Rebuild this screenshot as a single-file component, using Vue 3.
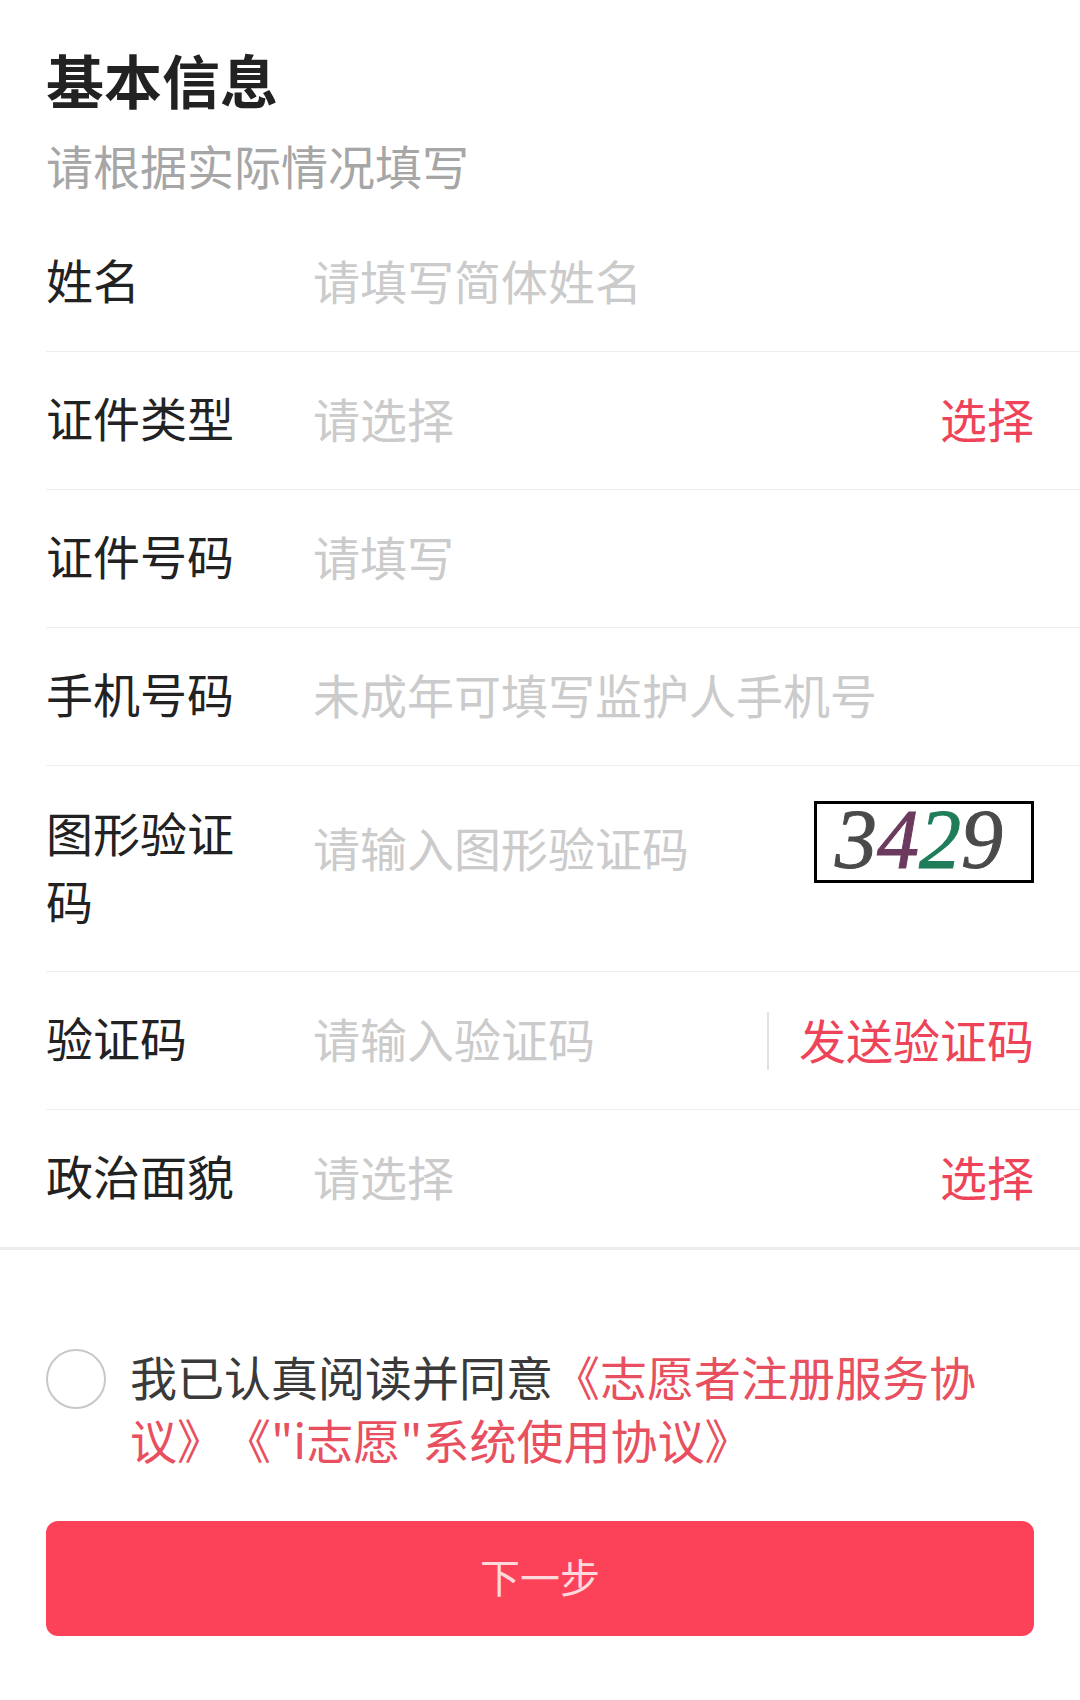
<template>
  <div class="page">
    <div class="head">
      <h1 class="title">基本信息</h1>
      <p class="sub">请根据实际情况填写</p>
    </div>

    <div class="form">
      <div class="row">
        <label class="label">姓名</label>
        <span class="holder">请填写简体姓名</span>
      </div>
      <div class="row">
        <label class="label">证件类型</label>
        <span class="holder">请选择</span>
        <span class="action">选择</span>
      </div>
      <div class="row">
        <label class="label">证件号码</label>
        <span class="holder">请填写</span>
      </div>
      <div class="row">
        <label class="label">手机号码</label>
        <span class="holder">未成年可填写监护人手机号</span>
      </div>
      <div class="row row-captcha">
        <label class="label">图形验证码</label>
        <span class="holder">请输入图形验证码</span>
        <div class="captcha">
          <span>3</span><span class="c-purple">4</span><span class="c-green">2</span><span>9</span>
        </div>
      </div>
      <div class="row">
        <label class="label">验证码</label>
        <span class="holder">请输入验证码</span>
        <span class="action action-send">发送验证码</span>
      </div>
      <div class="row">
        <label class="label">政治面貌</label>
        <span class="holder">请选择</span>
        <span class="action">选择</span>
      </div>
    </div>

    <div class="rule"></div>

    <div class="agree">
      <span class="check"></span>
      <p class="agree-text">我已认真阅读并同意<span class="link">《志愿者注册服务协议》《"i志愿"系统使用协议》</span></p>
    </div>

    <button class="next">下一步</button>
  </div>
</template>

<script setup>
</script>

<style>
html, body { background: #fff; }
</style>

<style scoped>
.page {
  width: 1080px;
  height: 1700px;
  background: #fff;
  font-family: "Noto Sans CJK SC", "Liberation Sans", sans-serif;
  overflow: hidden;
}
.head { padding: 39px 46px 0; }
.title { margin: 0; font-size: 58px; line-height: 80px; font-weight: 700; color: #222; }
.sub { margin: 14px 0 0; font-size: 47px; line-height: 64px; color: #a6a6a6; }

.form { margin: 17px 0 0 46px; }
.row {
  display: flex;
  align-items: center;
  height: 138px;
  padding: 0 46px 7px 0;
  border-bottom: 1px solid #eeeeee;
  box-sizing: border-box;
  font-size: 47px;
}
.row-captcha { height: 206px; padding: 0 46px 6px 0; }
.label { flex: 0 0 190px; margin-right: 77px; line-height: 68px; color: #222; }
.holder { flex: 1; color: #cbcbcb; }
.row-captcha .holder { margin-bottom: 38px; }
.action { color: #ee4358; }
.action-send {
  display: flex;
  align-items: center;
  height: 58px;
  margin-top: 8px;
  padding: 0 0 6px 30px;
  border-left: 2px solid #e2e2e2;
  box-sizing: border-box;
}
.captcha {
  display: flex;
  justify-content: center;
  align-items: center;
  width: 220px;
  height: 82px;
  margin-bottom: 48px;
  padding: 0 10px 4px 0;
  border: 3px solid #000;
  box-sizing: border-box;
  font-family: "Liberation Serif", serif;
  font-style: italic;
  font-size: 84px;
  line-height: 76px;
  color: #4a4a4a;
  -webkit-text-stroke: 1px currentColor;
}
.c-purple { color: #6b3a5e; }
.c-green { color: #1f7d5a; }

.rule { height: 3px; background: #ececec; margin-top: -1px; }

.agree { display: flex; align-items: flex-start; padding: 97px 46px 0; }
.check {
  flex: none;
  width: 60px;
  height: 60px;
  margin-top: 2px;
  border: 2px solid #c8c8c8;
  border-radius: 50%;
  box-sizing: border-box;
}
.agree-text {
  width: 856px;
  margin: -3px 0 0 24px;
  font-size: 47px;
  line-height: 63px;
  color: #3a3a3a;
  text-spacing-trim: space-all;
}
.link { color: #e8505f; }

.next {
  display: block;
  width: 988px;
  height: 115px;
  margin: 51px 46px 0;
  padding: 0 0 6px;
  border: 0;
  border-radius: 12px;
  background: #fc4259;
  color: #ffd9de;
  font-family: inherit;
  font-size: 40px;
}
</style>
